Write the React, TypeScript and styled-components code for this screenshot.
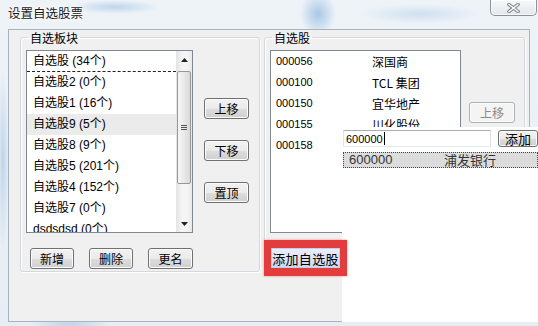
import React from "react";
import styled, { createGlobalStyle } from "styled-components";

const CJK = `"Noto Sans CJK SC", sans-serif`;
const LATIN = `"Liberation Sans", "Noto Sans CJK SC", sans-serif`;

const GlobalStyle = createGlobalStyle`
  html, body { margin: 0; padding: 0; }
  body { width: 538px; height: 326px; overflow: hidden; font-family: ${CJK}; }
  * { box-sizing: border-box; }
`;

const Window = styled.div`
  position: relative;
  width: 538px;
  height: 326px;
  overflow: hidden;
  display: flex;
  flex-direction: column;
  background:
    radial-gradient(ellipse 45px 7px at 115px 7px, rgba(150, 190, 225, 0.55), transparent),
    radial-gradient(ellipse 18px 22px at 318px 14px, rgba(110, 165, 215, 0.55), transparent),
    radial-gradient(ellipse 60px 10px at 420px 14px, rgba(170, 200, 230, 0.45), transparent),
    radial-gradient(ellipse 6px 90px at 3px 160px, rgba(150, 185, 220, 0.5), transparent),
    radial-gradient(ellipse 40px 5px at 70px 324px, rgba(150, 185, 220, 0.5), transparent),
    linear-gradient(#eef3f8, #e6edf4);
`;

const TitleBar = styled.div`
  height: 29px;
  flex: none;
  display: flex;
  justify-content: space-between;
  align-items: flex-start;
`;

const Title = styled.div`
  padding: 5px 0 0 8px;
  font-size: 12.5px;
  line-height: 15px;
  color: #1a1a1a;
  text-shadow: 0 0 6px #fff, 0 0 3px #fff;
`;

const CloseButton = styled.div`
  width: 47px;
  height: 16px;
  margin-right: 1px;
  border: 1px solid #8c929a;
  border-top: none;
  border-radius: 0 0 5px 5px;
  background: linear-gradient(#f7f8f9, #e3e7ec);
  box-shadow: inset 0 0 0 1px rgba(255, 255, 255, 0.7);
  display: flex;
  align-items: center;
  justify-content: center;
`;

const Frame = styled.div`
  flex: 1;
  display: flex;
  padding: 0 8px 4px 8px;
`;

const Body = styled.div`
  flex: 1;
  display: flex;
  align-items: flex-start;
  gap: 4px;
  padding: 0 4px 0 11px;
  border: 1px solid #a9b3be;
  background: #f0f0f0;
`;

const GroupBox = styled.fieldset<{ $width: number }>`
  margin: 0;
  min-width: 0;
  width: ${(p) => p.$width}px;
  height: 242px;
  padding: 5px 5px 3px 5px;
  border: 1px solid #d5d9dd;
  border-radius: 3px;
  box-shadow: inset 1px 1px 0 #fff, 1px 1px 0 #fff;
`;

const GroupLabel = styled.legend`
  margin-left: 2px;
  padding: 0 2px;
  font-size: 12px;
  line-height: 15px;
  color: #000;
`;

const LeftGrid = styled.div`
  display: grid;
  grid-template-columns: 167px 45px;
  grid-template-rows: 183px 21px;
  column-gap: 11px;
  row-gap: 15px;
`;

const RightStack = styled.div`
  display: flex;
  flex-direction: column;
  gap: 15px;
`;

const ListBox = styled.div<{ $width: number }>`
  width: ${(p) => p.$width}px;
  height: 183px;
  border: 1px solid #828790;
  background: #fff;
  display: flex;
  overflow: hidden;
`;

const ListItems = styled.div`
  flex: 1;
  display: flex;
  flex-direction: column;
  min-width: 0;
`;

const ListItem = styled.div<{ $selected?: boolean; $focused?: boolean }>`
  flex: none;
  height: 21px;
  line-height: 21px;
  padding-left: 6px;
  font-family: ${LATIN};
  font-size: 12px;
  white-space: nowrap;
  color: #000;
  background: ${(p) => (p.$selected ? "#ebebeb" : "transparent")};
  border-bottom: 1px ${(p) => (p.$focused ? "dashed #222" : "solid transparent")};
`;

const ScrollBar = styled.div`
  width: 16px;
  flex: none;
  display: flex;
  flex-direction: column;
  background: linear-gradient(90deg, #e4e4e4, #f5f5f5 40%, #f5f5f5 70%, #e8e8e8);
`;

const ScrollArrow = styled.div`
  height: 17px;
  flex: none;
  display: flex;
  align-items: center;
  justify-content: center;
`;

const ScrollThumb = styled.div`
  margin: 3px 1px 0 1px;
  height: 113px;
  border: 1px solid #979797;
  border-radius: 2px;
  background: linear-gradient(90deg, #f6f6f6, #e9e9e9 50%, #d9d9d9);
  display: flex;
  flex-direction: column;
  align-items: center;
  justify-content: center;
  gap: 1px;
`;

const Grip = styled.div`
  width: 6px;
  height: 1px;
  background: #555;
`;

const ScrollSpace = styled.div`
  flex: 1;
`;

const ButtonColumn = styled.div`
  display: flex;
  flex-direction: column;
  padding-top: 48px;
  gap: 21px;
`;

const Button = styled.div<{ $width: number; $height?: number; $disabled?: boolean; $size?: number }>`
  width: ${(p) => p.$width}px;
  height: ${(p) => p.$height ?? 21}px;
  flex: none;
  display: flex;
  align-items: center;
  justify-content: center;
  font-size: ${(p) => p.$size ?? 12}px;
  white-space: nowrap;
  border-radius: 3px;
  border: 1px solid ${(p) => (p.$disabled ? "#adb2b5" : "#707070")};
  color: ${(p) => (p.$disabled ? "#8a8a8a" : "#000")};
  background: ${(p) =>
    p.$disabled
      ? "#f4f4f4"
      : "linear-gradient(#f2f2f2 0%, #ebebeb 50%, #dddddd 51%, #cfcfcf 100%)"};
  box-shadow: inset 0 0 0 1px ${(p) => (p.$disabled ? "#fafafa" : "#fcfcfc")};
`;

const BottomRow = styled.div`
  grid-column: 1 / span 2;
  display: flex;
  gap: 15px;
  padding-left: 4px;
`;

const RightContent = styled.div`
  display: flex;
  align-items: flex-start;
  gap: 8px;
`;

const SideButtonSlot = styled.div`
  padding-top: 52px;
`;

const StockRow = styled.div`
  height: 21px;
  line-height: 21px;
  display: flex;
  padding-left: 5px;
  font-size: 12px;
  white-space: nowrap;
`;

const StockCode = styled.span`
  width: 96px;
  flex: none;
  font-family: ${LATIN};
  font-size: 11px;
`;

const StockName = styled.span`
  font-family: ${CJK};
`;

const AddSlot = styled.div`
  padding-left: 1px;
  display: flex;
`;

/* The red frame is an annotation drawn over the dialog (and over the popup). */
const Annotated = styled.div`
  position: relative;
  z-index: 2;
  &::before {
    content: "";
    position: absolute;
    left: -7px;
    right: -7px;
    top: -8px;
    bottom: -8px;
    z-index: -1;
    background: #e23c3c;
    box-shadow: 0 0 2px rgba(226, 60, 60, 0.6);
  }
`;

const AddStockButton = styled.div`
  width: 69px;
  height: 20px;
  display: flex;
  align-items: center;
  justify-content: center;
  font-size: 13px;
  letter-spacing: 0.3px;
  white-space: nowrap;
  color: #000;
  border: 1px solid #c3cee8;
  background: linear-gradient(#e9eefb, #cfdaf3);
`;

const Popup = styled.div`
  position: absolute;
  left: 342px;
  top: 127px;
  width: 196px;
  height: 195px;
  background: #fff;
  padding: 3px 0 0 1px;
  display: flex;
  flex-direction: column;
  gap: 5px;
`;

const InputRow = styled.div`
  display: flex;
  align-items: flex-start;
  gap: 7px;
`;

const TextBox = styled.div`
  width: 149px;
  height: 17px;
  border: 1px solid #abadb3;
  border-color: #abadb3 #dbdfe6 #e3e9ef #e2e3ea;
  padding-left: 2px;
  display: flex;
  align-items: center;
  font-family: ${LATIN};
  font-size: 11px;
  color: #000;
`;

const Caret = styled.span`
  width: 1px;
  height: 13px;
  background: #000;
  margin-left: 1px;
`;

const SuggestionRow = styled.div`
  height: 16px;
  border: 1px dotted #444;
  background: #dcdcdc;
  display: flex;
  align-items: center;
  font-size: 13px;
  line-height: 14px;
  color: #333;
  white-space: nowrap;
`;

const SuggestCode = styled.span`
  width: 100px;
  flex: none;
  padding-left: 5px;
  font-family: ${LATIN};
`;

const SuggestName = styled.span`
  font-family: ${CJK};
`;

const boards = [
  "自选股 (34个)",
  "自选股2 (0个)",
  "自选股1 (16个)",
  "自选股9 (5个)",
  "自选股8 (9个)",
  "自选股5 (201个)",
  "自选股4 (152个)",
  "自选股7 (0个)",
  "dsdsdsd (0个)",
];

const stocks = [
  ["000056", "深国商"],
  ["000100", "TCL 集团"],
  ["000150", "宜华地产"],
  ["000155", "川化股份"],
  ["000158", "常山股份"],
];

const Arrow = ({ up }: { up?: boolean }) => (
  <svg width="7" height="4" viewBox="0 0 7 4">
    <path d={up ? "M0 4 L3.5 0 L7 4 Z" : "M0 0 L3.5 4 L7 0 Z"} fill="#222" />
  </svg>
);

export default function App() {
  return (
    <>
      <GlobalStyle />
      <Window>
        <TitleBar>
          <Title>设置自选股票</Title>
          <CloseButton>
            <svg width="13" height="10" viewBox="0 0 13 10">
              <path d="M2 1.5 L11 8.5 M11 1.5 L2 8.5" stroke="#7d838a" strokeWidth="3.4" strokeLinecap="square" />
              <path d="M2 1.5 L11 8.5 M11 1.5 L2 8.5" stroke="#fff" strokeWidth="1.4" strokeLinecap="square" />
            </svg>
          </CloseButton>
        </TitleBar>
        <Frame>
          <Body>
            <GroupBox $width={240}>
              <GroupLabel>自选板块</GroupLabel>
              <LeftGrid>
                <ListBox $width={167}>
                  <ListItems>
                    {boards.map((b, i) => (
                      <ListItem key={b} $focused={i === 0} $selected={i === 3}>
                        {b}
                      </ListItem>
                    ))}
                  </ListItems>
                  <ScrollBar>
                    <ScrollArrow>
                      <Arrow up />
                    </ScrollArrow>
                    <ScrollThumb>
                      <Grip />
                      <Grip />
                      <Grip />
                    </ScrollThumb>
                    <ScrollSpace />
                    <ScrollArrow>
                      <Arrow />
                    </ScrollArrow>
                  </ScrollBar>
                </ListBox>
                <ButtonColumn>
                  <Button $width={45}>上移</Button>
                  <Button $width={45}>下移</Button>
                  <Button $width={45}>置顶</Button>
                </ButtonColumn>
                <BottomRow>
                  <Button $width={44}>新增</Button>
                  <Button $width={44}>删除</Button>
                  <Button $width={45}>更名</Button>
                </BottomRow>
              </LeftGrid>
            </GroupBox>
            <GroupBox $width={261}>
              <GroupLabel>自选股</GroupLabel>
              <RightStack>
                <RightContent>
                  <ListBox $width={191}>
                    <ListItems>
                      {stocks.map(([code, name]) => (
                        <StockRow key={code}>
                          <StockCode>{code}</StockCode>
                          <StockName>{name}</StockName>
                        </StockRow>
                      ))}
                    </ListItems>
                  </ListBox>
                  <SideButtonSlot>
                    <Button $width={46} $disabled>
                      上移
                    </Button>
                  </SideButtonSlot>
                </RightContent>
                <AddSlot>
                  <Annotated>
                    <AddStockButton>添加自选股</AddStockButton>
                  </Annotated>
                </AddSlot>
              </RightStack>
            </GroupBox>
          </Body>
        </Frame>
        <Popup>
          <InputRow>
            <TextBox>
              600000
              <Caret />
            </TextBox>
            <Button $width={40} $height={17} $size={13}>
              添加
            </Button>
          </InputRow>
          <SuggestionRow>
            <SuggestCode>600000</SuggestCode>
            <SuggestName>浦发银行</SuggestName>
          </SuggestionRow>
        </Popup>
      </Window>
    </>
  );
}
